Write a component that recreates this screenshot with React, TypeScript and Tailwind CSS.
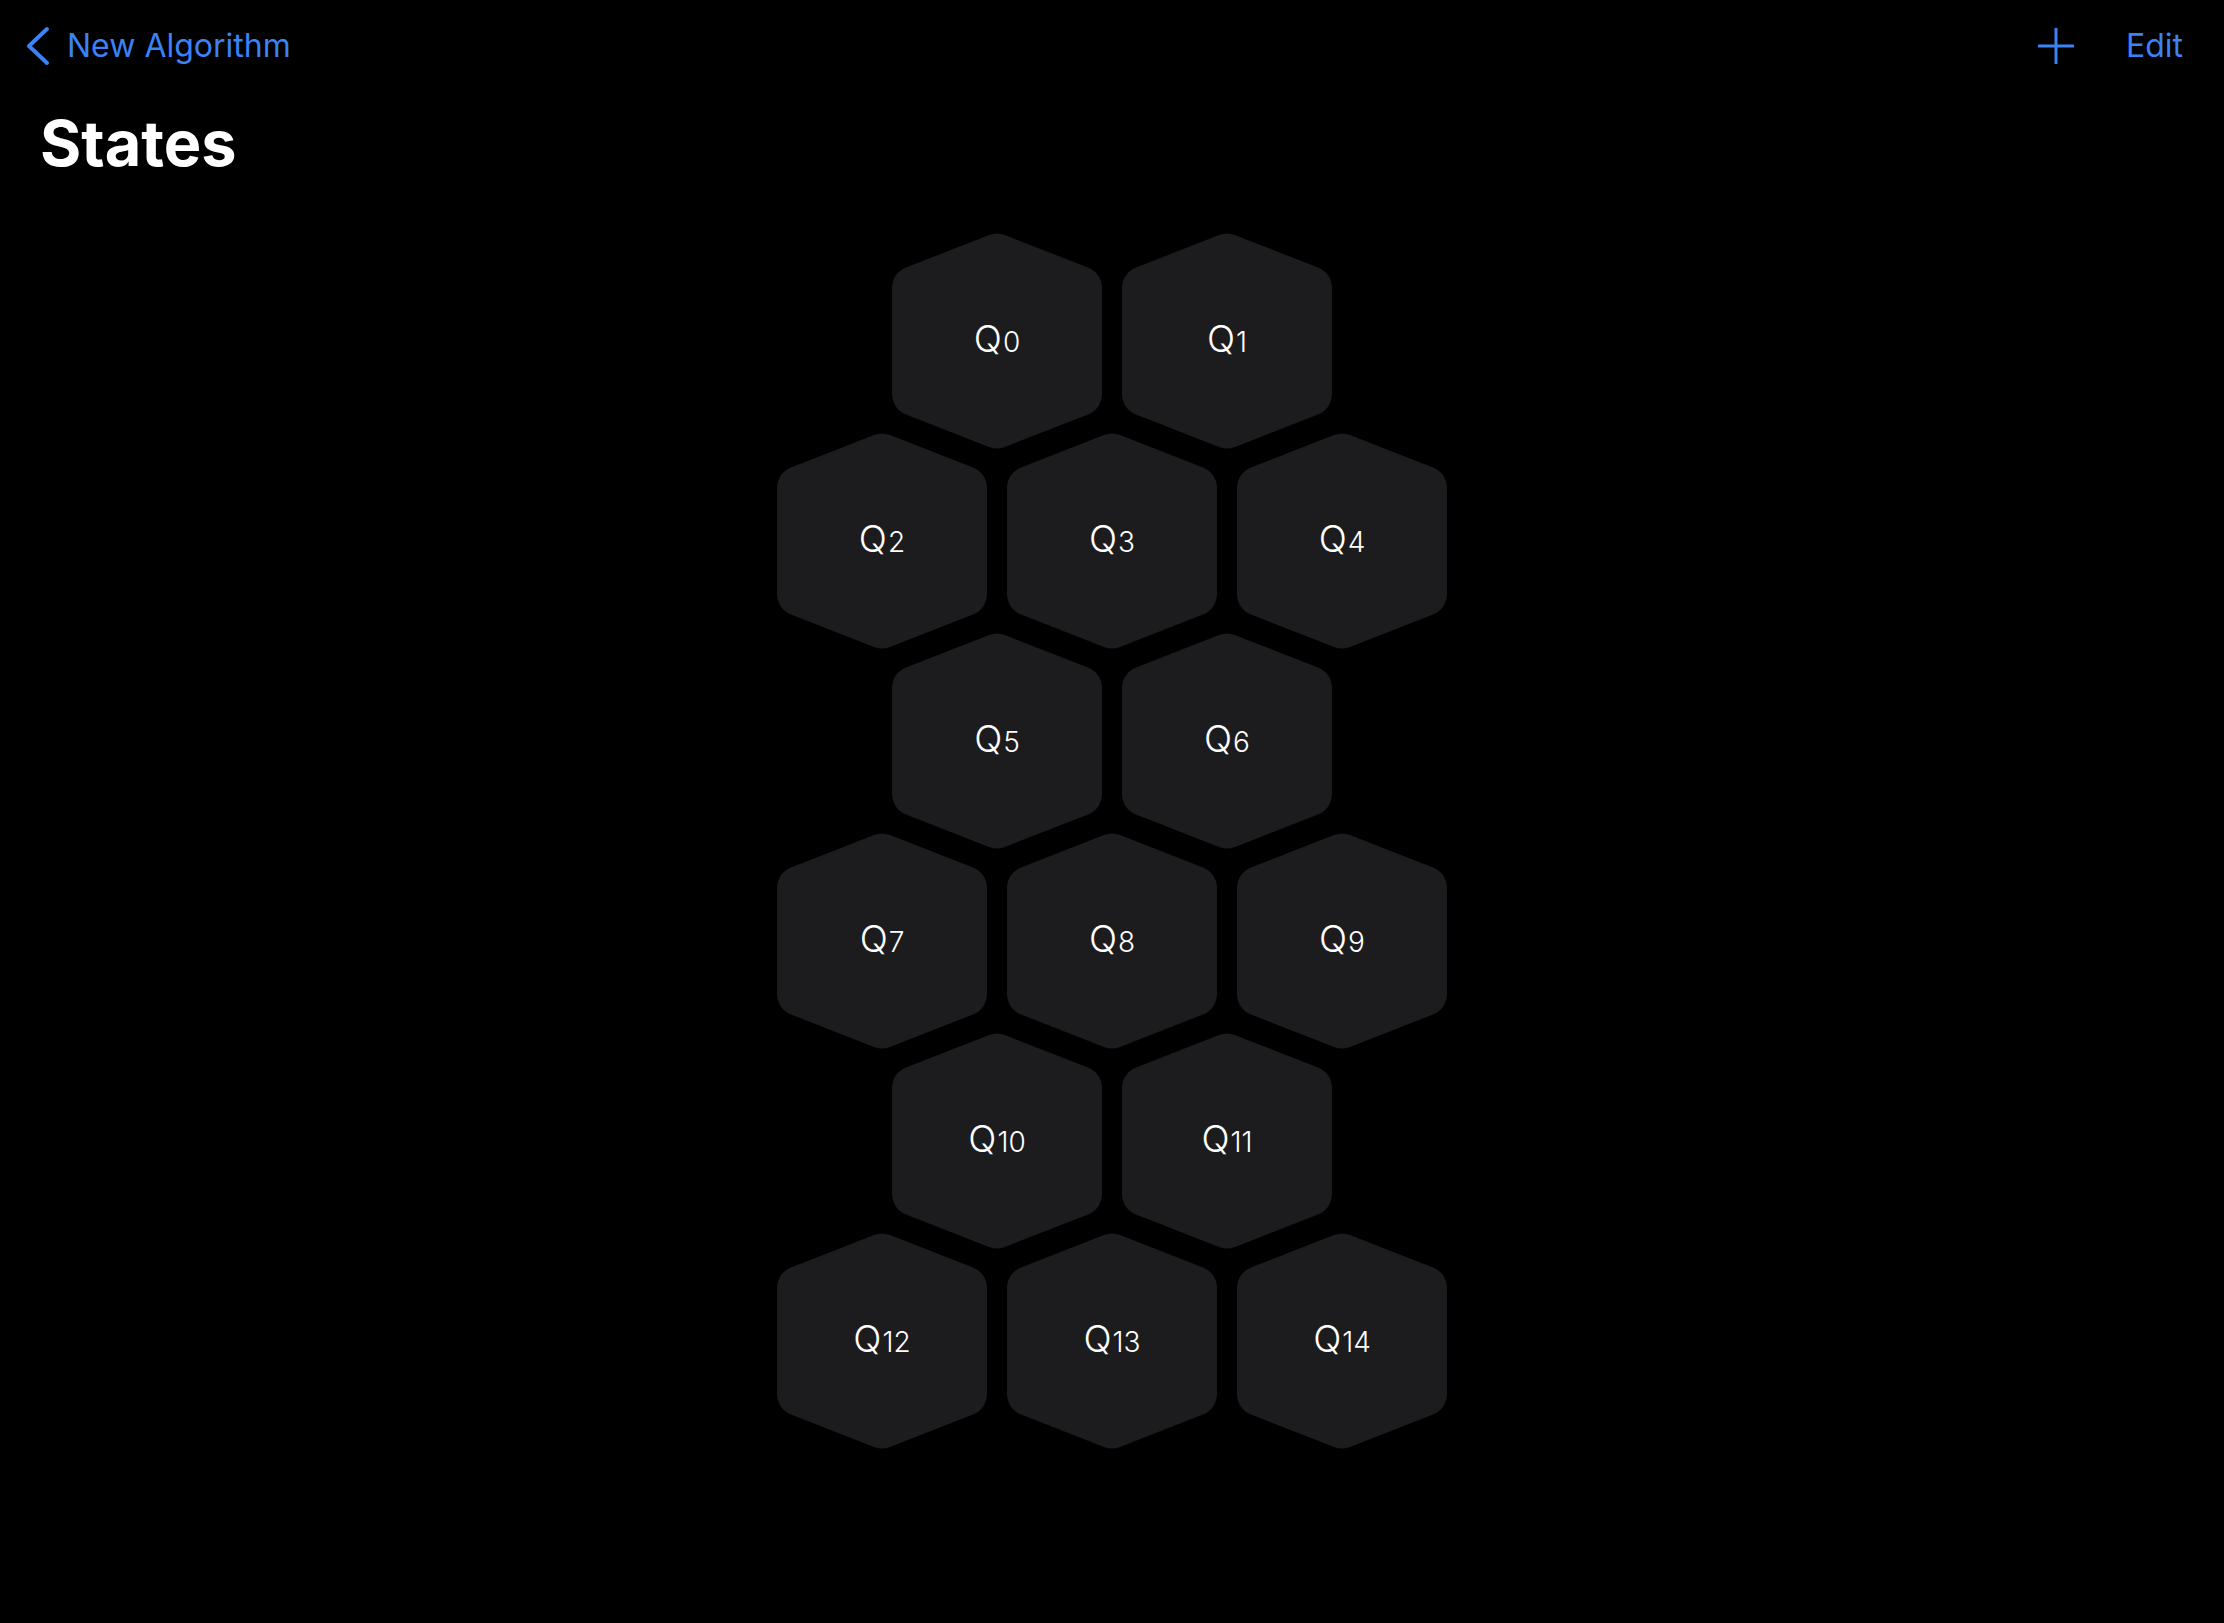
import React from "react";

type P = [number, number];

function roundedPath(pts: P[], r: number): string {
  const n = pts.length;
  const segs: { a: P; b: P }[] = [];
  for (let i = 0; i < n; i++) {
    const p0 = pts[(i - 1 + n) % n];
    const p1 = pts[i];
    const p2 = pts[(i + 1) % n];
    const v1x = p0[0] - p1[0], v1y = p0[1] - p1[1];
    const v2x = p2[0] - p1[0], v2y = p2[1] - p1[1];
    const l1 = Math.hypot(v1x, v1y), l2 = Math.hypot(v2x, v2y);
    const u1x = v1x / l1, u1y = v1y / l1, u2x = v2x / l2, u2y = v2y / l2;
    const cos = u1x * u2x + u1y * u2y;
    const theta = Math.acos(Math.max(-1, Math.min(1, cos)));
    const t = r / Math.tan(theta / 2);
    segs.push({
      a: [p1[0] + u1x * t, p1[1] + u1y * t],
      b: [p1[0] + u2x * t, p1[1] + u2y * t],
    });
  }
  let d = `M ${segs[0].a[0].toFixed(2)} ${segs[0].a[1].toFixed(2)} `;
  for (let i = 0; i < n; i++) {
    const s = segs[i];
    if (i > 0) d += `L ${s.a[0].toFixed(2)} ${s.a[1].toFixed(2)} `;
    d += `A ${r} ${r} 0 0 1 ${s.b[0].toFixed(2)} ${s.b[1].toFixed(2)} `;
  }
  d += "Z";
  return d;
}

const HEX_PATH = roundedPath(
  [
    [105, 0],
    [210, 41],
    [210, 177],
    [105, 218],
    [0, 177],
    [0, 41],
  ],
  22
);

function Hex({ n }: { n: number }) {
  return (
    <div className="relative w-[210px] h-[218px] shrink-0">
      <svg
        className="absolute inset-0"
        width="210"
        height="218"
        viewBox="0 0 210 218"
      >
        <path d={HEX_PATH} fill="#1c1c1e" />
      </svg>
      <div className="relative flex h-full w-full items-center justify-center pb-[5px]">
        <div className="flex items-baseline text-white leading-none font-light">
          <span className="text-[37px]">Q</span>
          <span className="text-[28px] ml-[1px]">{n}</span>
        </div>
      </div>
    </div>
  );
}

const rows: number[][] = [
  [0, 1],
  [2, 3, 4],
  [5, 6],
  [7, 8, 9],
  [10, 11],
  [12, 13, 14],
];

export default function App() {
  return (
    <div
      className="min-h-[1623px] w-[2224px] bg-black"
      style={{ fontFamily: "Inter, 'Noto Sans', sans-serif" }}
    >
      <div className="flex h-[90px] items-center justify-between pl-[25px] pr-[41px] pt-[1px]">
        <div className="flex items-center gap-[16px] text-[#3b82f6]">
          <svg width="26" height="40" viewBox="0 0 26 40" fill="none">
            <polyline
              points="22,3 4,20 22,37"
              stroke="#3b82f6"
              strokeWidth="4"
              strokeLinecap="round"
              strokeLinejoin="round"
            />
          </svg>
          <span className="text-[32px] leading-none">New Algorithm</span>
        </div>
        <div className="flex items-center gap-[52px] text-[#3b82f6]">
          <svg width="36" height="36" viewBox="0 0 36 36" fill="none">
            <path
              d="M18 1 V35 M1 18 H35"
              stroke="#3b82f6"
              strokeWidth="3"
              strokeLinecap="round"
            />
          </svg>
          <span className="text-[32px] leading-none">Edit</span>
        </div>
      </div>
      <div className="pl-[40px] pt-[22px]">
        <h1 className="text-[63px] font-bold leading-none text-white">
          States
        </h1>
      </div>
      <div className="flex flex-col items-center pt-[57px]">
        {rows.map((row, i) => (
          <div
            key={i}
            className={`flex gap-[20px] ${i > 0 ? "-mt-[18px]" : ""}`}
          >
            {row.map((n) => (
              <Hex key={n} n={n} />
            ))}
          </div>
        ))}
      </div>
    </div>
  );
}
